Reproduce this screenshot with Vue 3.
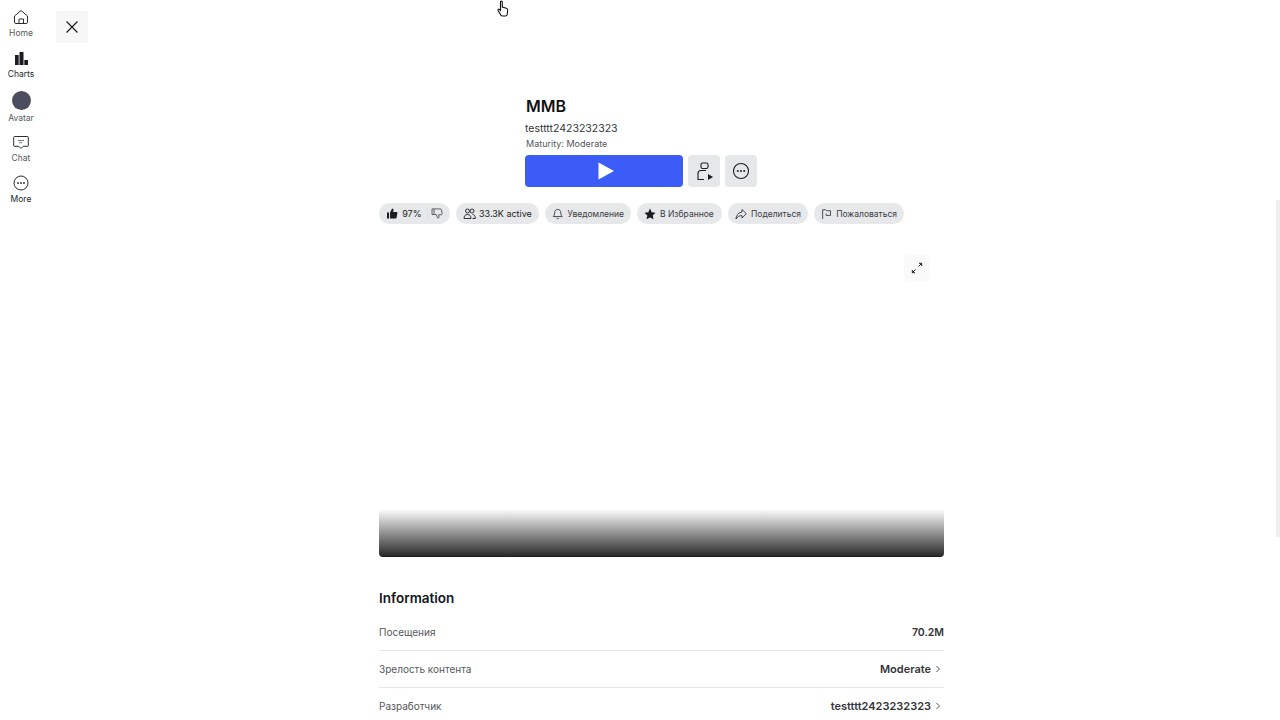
<template>
  <div class="page">
    <nav class="rail">
      <a v-for="item in navItems" :key="item.label" class="rail-item" :class="{ dark: item.dark }">
        <span v-if="item.icon === 'avatar'" class="avatar"></span>
        <svg v-else width="18" height="18" viewBox="0 0 18 18" fill="none" stroke="#2b2d33" stroke-width="1">
          <template v-if="item.icon === 'home'">
            <path d="M2.500 8 9 2.500 15.500 8v6.200a1.300 1.300 0 0 1-1.300 1.300H3.800a1.300 1.300 0 0 1-1.300-1.300z" />
            <path d="M7 15.500V11h4.500v4.500" />
          </template>
          <template v-else-if="item.icon === 'charts'">
            <path d="M3 6h3.700v10H3zM7.500 3h4v13h-4zM12.300 11H16v5h-3.700z" fill="#1c1d22" stroke="none" />
          </template>
          <template v-else-if="item.icon === 'chat'">
            <path d="M2.500 3.500h13a.8.8 0 0 1 .8.8v8.200a.8.8 0 0 1-.8.8h-4.300L9 15.500l-2.200-2.200H2.500a.8.8 0 0 1-.8-.8V4.300a.8.8 0 0 1 .8-.8z" />
            <path d="M6 7.500h6M7 9.700h3" stroke="#777" />
          </template>
          <template v-else>
            <circle cx="9" cy="9" r="7" />
            <circle cx="6" cy="9" r=".9" fill="#2b2d33" stroke="none" />
            <circle cx="9" cy="9" r=".9" fill="#2b2d33" stroke="none" />
            <circle cx="12" cy="9" r=".9" fill="#2b2d33" stroke="none" />
          </template>
        </svg>
        <span class="rail-label">{{ item.label }}</span>
      </a>
    </nav>

    <div class="close-col">
      <button class="close">
        <svg width="16" height="16" viewBox="0 0 16 16" fill="none" stroke="#1c1d22" stroke-width="1.200">
          <path d="M2.500 2.500 13.500 13.500M13.500 2.500 2.500 13.500" />
        </svg>
      </button>
    </div>

    <main class="content">
      <header class="head">
        <h1>MMB</h1>
        <p class="creator">testttt2423232323</p>
        <p class="maturity">Maturity: Moderate</p>
        <div class="actions">
          <button class="play">
            <svg width="18" height="18" viewBox="0 0 18 18"><path d="M1.500 .5 17 9 1.500 17.500z" fill="#fff" /></svg>
          </button>
          <button class="square">
            <svg width="20" height="22" viewBox="0 0 20 22" fill="none" stroke="#1c1d22" stroke-width="1.100">
              <rect x="7" y="3" width="7" height="5.500" rx="1.600" />
              <path d="M12 10.500H7a3 3 0 0 0-3 3v6h6" />
              <path d="M14 14v6l5-3z" fill="#1c1d22" stroke="none" />
            </svg>
          </button>
          <button class="square">
            <svg width="18" height="18" viewBox="0 0 18 18" fill="none" stroke="#1c1d22" stroke-width="1.100">
              <circle cx="9" cy="9" r="7.500" />
              <circle cx="5.800" cy="9" r="1" fill="#1c1d22" stroke="none" />
              <circle cx="9" cy="9" r="1" fill="#1c1d22" stroke="none" />
              <circle cx="12.200" cy="9" r="1" fill="#1c1d22" stroke="none" />
            </svg>
          </button>
        </div>
      </header>

      <div class="pills">
        <div class="pill vote">
          <svg width="13" height="13" viewBox="0 0 12 12" fill="#1c1d22"><path d="M1 5h2v6H1zM4 5l2-4c1 0 1.600.7 1.400 1.700L7 4.500h3.300c.6 0 1 .5.900 1.100l-.8 4.600c-.1.500-.5.800-1 .8H4z" /></svg>
          <span class="num">97%</span>
          <i class="sep"></i>
          <svg class="down" width="13" height="13" viewBox="0 0 12 12" fill="none" stroke="#555" stroke-width=".9"><path d="M1 1.500h2v5.500H1zM3 1.500h6.300c.4 0 .8.300.9.700l.8 4c.1.500-.3 1-.8 1H7.500l.4 2c.1.800-.4 1.300-1.200 1.300L5 7H3" /></svg>
        </div>
        <div class="pill active">
          <svg width="13" height="12" viewBox="0 0 13 12" fill="none" stroke="#1c1d22" stroke-width=".9"><circle cx="4.500" cy="3" r="2" /><circle cx="9" cy="3" r="2" /><path d="M1 10.500c0-2.500 1.200-4 3.500-4s3.500 1.500 3.500 4zM9.500 6.500c1.800 0 2.800 1.500 2.800 4H9.500" /></svg>
          <span class="num">33.3K active</span>
        </div>
        <div v-for="pill in pills" :key="pill.label" class="pill" :style="{ width: pill.width + 'px' }">
          <svg width="12" height="12" viewBox="0 0 12 12" :fill="pill.solid ? '#1c1d22' : 'none'" :stroke="pill.solid ? 'none' : '#1c1d22'" stroke-width=".8"><path :d="pill.path" /></svg>
          <span class="ru">{{ pill.label }}</span>
        </div>
      </div>

      <div class="media">
        <button class="expand">
          <svg width="12" height="12" viewBox="0 0 12 12" fill="none" stroke="#1c1d22" stroke-width="1"><path d="M7.500 4.500 10.500 1.500M8 1.300h2.700V4M4.500 7.500 1.500 10.500M1.300 8v2.700H4" /></svg>
        </button>
        <div class="fade"></div>
      </div>

      <section class="info">
        <h2>Information</h2>
        <div class="row first">
          <span class="key">Посещения</span>
          <span class="val visits">70.2M</span>
        </div>
        <div class="row">
          <span class="key">Зрелость контента</span>
          <span class="val">Moderate <svg class="chev" width="6" height="8" viewBox="0 0 6 8" fill="none" stroke="#555"><path d="m1.500 1 3 3-3 3" /></svg></span>
        </div>
        <div class="row last">
          <span class="key">Разработчик</span>
          <span class="val">testttt2423232323 <svg class="chev" width="6" height="8" viewBox="0 0 6 8" fill="none" stroke="#555"><path d="m1.500 1 3 3-3 3" /></svg></span>
        </div>
      </section>
    </main>

    <div class="scroll-thumb"></div>
    <svg class="cursor" width="14" height="18" viewBox="0 0 14 18" fill="#fff" stroke="#111" stroke-width="1.100">
      <path d="M4.500 1.500c.8-.8 1.800-.3 1.800.7V7l4 1.200c1 .3 1.500 1 1.400 2l-.5 4c-.1 1-.7 1.800-1.700 1.800H6.500c-.7 0-1.200-.3-1.600-.9L2 10.500c-.5-.9.600-1.800 1.400-1.100l1.100 1z" />
    </svg>
  </div>
</template>

<script setup>
const navItems = [
  { label: 'Home', icon: 'home' },
  { label: 'Charts', icon: 'charts', dark: true },
  { label: 'Avatar', icon: 'avatar' },
  { label: 'Chat', icon: 'chat' },
  { label: 'More', icon: 'more', dark: true },
]

const pills = [
  { label: 'Уведомление', width: 86, path: 'M6 1.200c-2 0-3.200 1.500-3.200 3.300 0 2.500-1 3.500-1.500 4.200h9.400c-.5-.7-1.500-1.700-1.500-4.200 0-1.800-1.200-3.300-3.200-3.300zM4.800 10.300c.4.800 2 .8 2.400 0' },
  { label: 'В Избранное', width: 85, solid: true, path: 'M6 .6 7.700 4.200l3.900.5-2.900 2.700.8 3.900L6 9.400l-3.500 1.900.8-3.900L.4 4.700l3.900-.5z' },
  { label: 'Поделиться', width: 80, path: 'M7 1.500 11.300 5.700 7 10V7.600C4.500 7.600 2.500 8.500 1 11c.3-3.500 2-6.500 6-7z' },
  { label: 'Пожаловаться', width: 90, path: 'M1.800 11.500V1.500h3.500l1 1h4v5H5.500v-2' },
]
</script>

<style>
html,
body {
  background: #fff;
  overflow: hidden;
}
</style>

<style scoped>
.page {
  display: flex;
  height: 720px;
  overflow: hidden;
  position: relative;
  font-family: Inter, "Noto Sans", sans-serif;
  color: #1c1d22;
}

.rail {
  width: 42px;
  flex: none;
  padding-top: 8px;
  display: flex;
  flex-direction: column;
}

.rail-item {
  height: 41px;
  display: flex;
  flex-direction: column;
  align-items: center;
  font-size: 8.500px;
  color: #55575c;
}

.rail-item.dark {
  color: #24262b;
}

.rail-item:nth-child(3) {
  height: 43px;
  padding-top: 1px;
  box-sizing: border-box;
}

.rail-label {
  margin-top: 1px;
  line-height: 12px;
}

.avatar {
  width: 19px;
  height: 19px;
  border-radius: 50%;
  background: #4c4d5e;
  margin-bottom: 1px;
  flex: none;
}

.close-col {
  width: 337px;
  flex: none;
  padding: 11px 0 0 14px;
  box-sizing: border-box;
}

.close {
  width: 32px;
  height: 32px;
  border: 0;
  border-radius: 3px;
  background: #f7f7f8;
  display: flex;
  align-items: center;
  justify-content: center;
  padding: 0;
}

.content {
  width: 565px;
  flex: none;
}

.head {
  padding: 96px 0 0 146px;
}

h1 {
  margin: 0 0 0 1px;
  font-size: 16px;
  font-weight: 600;
  line-height: 20px;
  color: #111216;
}

.creator {
  margin: 6px 0 0;
  font-size: 10.500px;
  line-height: 14px;
  color: #33353a;
}

.maturity {
  margin: 2px 0 0 1px;
  font-size: 9px;
  line-height: 12px;
  color: #55575c;
}

.actions {
  display: flex;
  gap: 5px;
  margin-top: 5px;
}

.play {
  width: 158px;
  height: 32px;
  border: 0;
  border-radius: 4px;
  background: #3b5cf6;
  display: flex;
  align-items: center;
  justify-content: center;
  padding: 0 0 0 3px;
}

.square {
  width: 32px;
  height: 32px;
  border: 0;
  border-radius: 4px;
  background: #e6e7e9;
  display: flex;
  align-items: center;
  justify-content: center;
  padding: 0;
}

.pills {
  display: flex;
  gap: 6px;
  margin-top: 16px;
}

.pill {
  height: 21px;
  border-radius: 11px;
  background: #e7e8ea;
  display: flex;
  align-items: center;
  gap: 4px;
  padding: 0 7px;
  box-sizing: border-box;
  font-size: 8.500px;
  color: #3a3c42;
  flex: none;
}

.vote {
  width: 71px;
}

.vote .num {
  width: 21px;
}

.sep {
  width: 1px;
  height: 12px;
  background: #dddee0;
  margin-left: 1px;
}

.down {
  margin-left: -1px;
}

.active {
  width: 83px;
  gap: 3px;
}

.num {
  font-size: 9px;
  color: #1c1d22;
  white-space: nowrap;
}

.ru {
  white-space: nowrap;
}

.media {
  height: 324px;
  margin-top: 9px;
  position: relative;
  display: flex;
  flex-direction: column;
  justify-content: flex-end;
}

.expand {
  position: absolute;
  top: 22px;
  left: 525px;
  width: 26px;
  height: 26px;
  border: 0;
  border-radius: 4px;
  background: #fafafa;
  display: flex;
  align-items: center;
  justify-content: center;
  padding: 0;
}

.fade {
  height: 48px;
  border-radius: 0 0 4px 4px;
  background: linear-gradient(#ffffff, #2c2c2c 97%, #111);
}

.info {
  margin-top: 33px;
}

h2 {
  margin: 0;
  font-size: 13.500px;
  font-weight: 600;
  line-height: 17px;
  color: #15161a;
}

.row {
  height: 37px;
  display: flex;
  align-items: center;
  justify-content: space-between;
  border-bottom: 1px solid #e8e8ea;
  box-sizing: border-box;
  font-size: 10px;
}

.row.first {
  margin-top: 7px;
}

.row.last {
  height: 36px;
}

.key {
  color: #55575c;
}

.val {
  display: flex;
  align-items: center;
  gap: 4px;
  font-size: 11px;
  font-weight: 600;
  color: #33353a;
}

.val.visits {
  font-size: 10.500px;
}

.chev {
  margin: 0 3px 0 0;
}

.scroll-thumb {
  position: absolute;
  right: 0;
  top: 200px;
  width: 4px;
  height: 337px;
  background: #efefef;
}

.cursor {
  position: absolute;
  left: 496px;
  top: 0;
}
</style>
